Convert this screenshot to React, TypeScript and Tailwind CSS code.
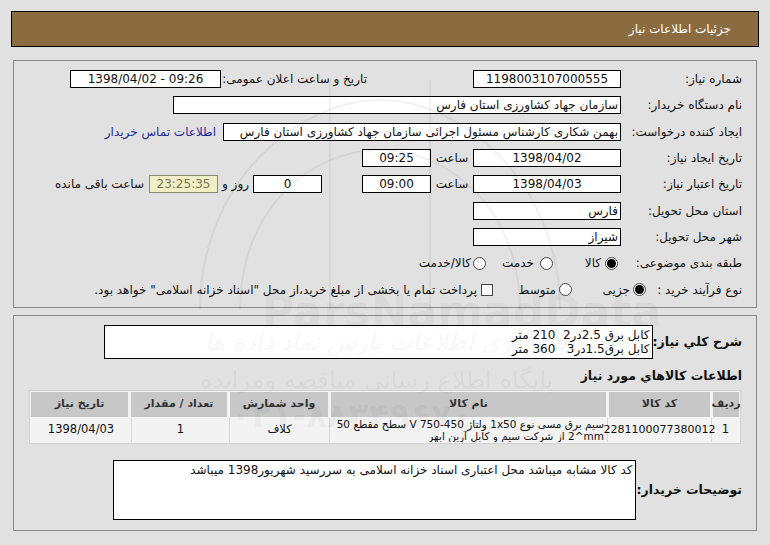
import React from "react";

const font = { fontFamily: '"DejaVu Sans", "Noto Sans", sans-serif' };

function Radio({ checked }: { checked?: boolean }) {
  return (
    <span className="w-[13px] h-[13px] rounded-full border border-[#444] bg-white flex items-center justify-center shrink-0">
      {checked ? <span className="w-[9px] h-[9px] rounded-full bg-black" /> : null}
    </span>
  );
}

function Row({ children }: { children: React.ReactNode }) {
  return <div className="flex items-center h-[26.3px] shrink-0">{children}</div>;
}

export default function App() {
  return (
    <div
      dir="rtl"
      className="relative w-[770px] h-[545px] overflow-hidden bg-[#e1e1e1] text-[12px] text-[#111] pt-[11px] px-[11px]"
      style={font}
    >
      {/* header */}
      <div className="h-[36px] bg-[#8b6c40] border border-black text-white flex items-center pr-[27px] text-[12px]">
        جزئیات اطلاعات نیاز
      </div>

      {/* panel 1 */}
      <div className="mt-[13px] mx-[2px] h-[248px] border border-[#8a8a8a] pt-[5px] pr-[14px] flex flex-col">
        <Row>
          <div className="w-[121px] shrink-0">شماره نیاز:</div>
          <div className="w-[148px] h-[18px] bg-white border border-black text-center leading-[16px]">1198003107000555</div>
          <div className="w-[146px] mr-[106px] text-right">تاریخ و ساعت اعلان عمومی:</div>
          <div dir="ltr" className="w-[151px] h-[18px] bg-white border border-black text-center leading-[16px]">1398/04/02 - 09:26</div>
        </Row>
        <Row>
          <div className="w-[121px] shrink-0">نام دستگاه خریدار:</div>
          <div className="w-[448px] h-[18px] bg-white border border-black pr-[2px] leading-[16px]">سازمان جهاد کشاورزی استان فارس</div>
        </Row>
        <Row>
          <div className="w-[121px] shrink-0">ایجاد کننده درخواست:</div>
          <div className="w-[398px] h-[18px] bg-white border border-black pr-[2px] leading-[16px] whitespace-nowrap overflow-hidden">
            بهمن شکاری کارشناس مسئول اجرائی سازمان جهاد کشاورزی استان فارس
          </div>
          <div className="mr-[7px] text-[#1f2a9e] whitespace-nowrap">اطلاعات تماس خریدار</div>
        </Row>
        <Row>
          <div className="w-[121px] shrink-0">تاریخ ایجاد نیاز:</div>
          <div className="w-[148px] h-[18px] bg-white border border-black text-center leading-[16px]">1398/04/02</div>
          <div className="w-[42px] text-center">ساعت</div>
          <div className="w-[69px] h-[18px] bg-white border border-black text-center leading-[16px]">09:25</div>
        </Row>
        <Row>
          <div className="w-[121px] shrink-0">تاریخ اعتبار نیاز:</div>
          <div className="w-[148px] h-[18px] bg-white border border-black text-center leading-[16px]">1398/04/03</div>
          <div className="w-[42px] text-center">ساعت</div>
          <div className="w-[69px] h-[18px] bg-white border border-black text-center leading-[16px]">09:00</div>
          <div className="w-[69px] h-[18px] mr-[40px] bg-white border border-black text-center leading-[16px]">0</div>
          <div className="w-[35px] text-center whitespace-nowrap">روز و</div>
          <div className="w-[69px] h-[18px] bg-[#f1efc6] border border-[#8a8a70] text-[#77775a] text-center leading-[16px]">23:25:35</div>
          <div className="mr-[5px] whitespace-nowrap">ساعت باقی مانده</div>
        </Row>
        <Row>
          <div className="w-[121px] shrink-0">استان محل تحویل:</div>
          <div className="w-[148px] h-[18px] bg-white border border-black pr-[2px] leading-[16px]">فارس</div>
        </Row>
        <Row>
          <div className="w-[121px] shrink-0">شهر محل تحویل:</div>
          <div className="w-[148px] h-[18px] bg-white border border-black pr-[2px] leading-[16px]">شیراز</div>
        </Row>
        <Row>
          <div className="w-[124px] shrink-0">طبقه بندی موضوعی:</div>
          <div className="w-[65px] flex items-center gap-[4px]"><Radio checked /><span>کالا</span></div>
          <div className="w-[67px] flex items-center gap-[6px]"><Radio /><span>خدمت</span></div>
          <div className="flex items-center gap-[2px]"><Radio /><span>کالا/خدمت</span></div>
        </Row>
        <Row>
          <div className="w-[96px] shrink-0">نوع فرآیند خرید :</div>
          <div className="w-[74px] flex items-center gap-[3px]"><Radio checked /><span>جزیی</span></div>
          <div className="w-[79px] flex items-center gap-[3px]"><Radio /><span>متوسط</span></div>
          <div className="flex items-center gap-[4px] whitespace-nowrap">
            <span className="w-[12px] h-[12px] border border-[#444] bg-white shrink-0" />
            <span>پرداخت تمام یا بخشی از مبلغ خرید،از محل "اسناد خزانه اسلامی" خواهد بود.</span>
          </div>
        </Row>
      </div>

      {/* panel 2 */}
      <div className="mt-[7px] mx-[2px] border border-[#8a8a8a] pt-[9px] pb-[10px] flex flex-col">
        <div className="flex items-center h-[34px] pr-[14px] pl-[90px]">
          <span className="font-bold text-[12.5px] whitespace-nowrap">شرح کلي نیاز:</span>
          <div className="w-[549px] h-[34px] mr-auto shrink-0 bg-white border border-black pr-[2px] pt-[2px] text-[12px] leading-[14px] whitespace-pre">
            {"کابل برق 2.5در2  210 متر\nکابل برق1.5در3   360 متر"}
          </div>
        </div>
        <div className="mt-[7px] h-[20px] flex items-center pr-[14px] font-bold text-[12.5px]">اطلاعات کالاهاي مورد نیاز</div>
        <div className="mt-[4px] mx-[15px] border border-[#d2d2d2] bg-[#f3f3f3] p-[1px]">
          <div className="grid grid-cols-[26px_101px_275px_98px_96px_1fr] gap-x-[3px]">
            <div className="h-[25px] bg-[#c7c7c7] flex items-center justify-center font-bold text-[11px] text-[#333]">ردیف</div>
            <div className="h-[25px] bg-[#c7c7c7] flex items-center justify-center font-bold text-[11px] text-[#333]">کد کالا</div>
            <div className="h-[25px] bg-[#c7c7c7] flex items-center justify-center font-bold text-[11px] text-[#333]">نام کالا</div>
            <div className="h-[25px] bg-[#c7c7c7] flex items-center justify-center font-bold text-[11px] text-[#333]">واحد شمارش</div>
            <div className="h-[25px] bg-[#c7c7c7] flex items-center justify-center font-bold text-[11px] text-[#333]">تعداد / مقدار</div>
            <div className="h-[25px] bg-[#c7c7c7] flex items-center justify-center font-bold text-[11px] text-[#333]">تاریخ نیاز</div>
          </div>
          <div className="grid grid-cols-[28px_104px_278px_100px_98px_1fr] text-[11.5px] mt-[1px]">
            <div className="h-[24px] border-l border-[#d8d8d8] flex items-center justify-center">1</div>
            <div className="h-[24px] border-l border-[#d8d8d8] flex items-center justify-center text-[11px]">2281100077380012</div>
            <div className="h-[24px] border-l border-[#d8d8d8] pr-[3px] text-[10.5px] leading-[12px] text-right overflow-hidden whitespace-nowrap">
              سیم برق مسی نوع 1x50 ولتاژ 450-750 V سطح مقطع 50
              <br />
              <bdi dir="ltr">2^mm</bdi> از شرکت سیم و کابل آرین ابهر
            </div>
            <div className="h-[24px] border-l border-[#d8d8d8] flex items-center justify-center">کلاف</div>
            <div className="h-[24px] border-l border-[#d8d8d8] flex items-center justify-center">1</div>
            <div className="h-[24px] flex items-center justify-center">1398/04/03</div>
          </div>
        </div>
        <div className="mt-[16px] flex items-center pr-[14px] pl-[104px]">
          <span className="font-bold text-[12.5px] whitespace-nowrap">توضیحات خریدار:</span>
          <div className="w-[523px] h-[60px] mr-auto shrink-0 bg-white border border-black pr-[3px] pt-[2px] leading-[15px]">
            کد کالا مشابه میباشد محل اعتباری اسناد خزانه اسلامی به سررسید شهریور1398 میباشد
          </div>
        </div>
      </div>

      {/* bottom buttons (clipped) */}
      <div dir="ltr" className="mt-[14px] flex pl-[127px] gap-[16px]">
        <div className="w-[50px] h-[22px] bg-[#f6e2e2] border border-black" />
        <div className="w-[50px] h-[22px] bg-[#f6e2e2] border border-black" />
        <div className="w-[50px] h-[22px] bg-white border border-black" />
        <div className="w-[180px] h-[22px] bg-[#f4fbf4] border border-black" />
        <div className="w-[100px] h-[22px] bg-white border border-black" />
      </div>

      {/* watermark */}
      <div className="absolute left-[262px] top-[290px] pointer-events-none text-[44px] font-bold text-black/[0.045] leading-none" dir="ltr">
        ParsNamadData
      </div>
      <div className="absolute left-[205px] top-[330px] pointer-events-none text-[24px] italic text-black/[0.05] leading-none whitespace-nowrap">
        فن آوری اطلاعات پارس نماد داده ها
      </div>
      <div className="absolute left-[200px] top-[368px] pointer-events-none text-[24px] text-black/[0.045] leading-none whitespace-nowrap">
        پایگاه اطلاع رسانی مناقصه ومزایده
      </div>
      <div className="absolute left-[230px] top-[398px] pointer-events-none text-[34px] font-bold text-black/[0.045] leading-none whitespace-nowrap" dir="ltr">
        ۰۲۱-۸۸۳۴۹۶۷۰
      </div>
      <svg className="absolute left-[180px] top-[60px] pointer-events-none" width="400" height="250" viewBox="0 0 400 250" fill="none" stroke="rgba(0,0,0,0.05)" strokeWidth="2">
        <path d="M20 250 C 20 120, 120 40, 200 40 C 280 40, 380 120, 380 250" />
        <path d="M60 250 C 60 150, 130 90, 200 90 C 270 90, 340 150, 340 250" />
        <path d="M150 20 L150 250" />
        <path d="M250 20 L250 250" />
      </svg>
    </div>
  );
}
